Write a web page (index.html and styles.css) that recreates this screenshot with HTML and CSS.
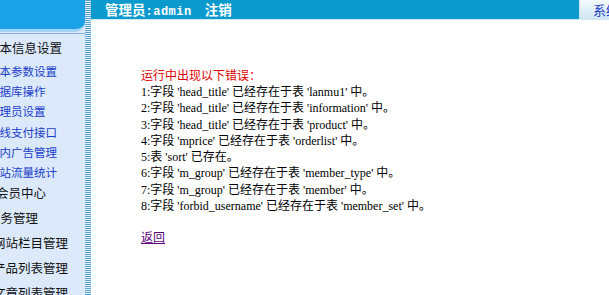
FILE: index.html
```html
<!DOCTYPE html>
<html lang="zh-CN">
<head>
  <meta charset="UTF-8">
  <title>后台管理</title>
  <link rel="stylesheet" href="styles.css">
</head>
<body>
  <!-- left menu frame, scrolled a little to the right -->
  <div class="side">
    <div class="menu">
      <div class="logo"><span>网站后台管理系统</span></div>
      <div class="items">
        <div class="cat first">基本信息设置</div>
        <a class="sub" href="#">基本参数设置</a>
        <a class="sub" href="#">数据库操作</a>
        <a class="sub" href="#">管理员设置</a>
        <a class="sub" href="#">在线支付接口</a>
        <a class="sub" href="#">站内广告管理</a>
        <a class="sub" href="#">网站流量统计</a>
        <div class="cat c1">会员中心</div>
        <div class="cat c2">业务管理</div>
        <div class="cat c3">网站栏目管理</div>
        <div class="cat c3">产品列表管理</div>
        <div class="cat c3">文章列表管理</div>
      </div>
    </div>
    <div class="stripe"></div>
  </div>

  <div class="main">
    <div class="top">
      <div class="user">管理员<span class="name">:admin</span><a class="logout" href="#">注销</a></div>
      <div class="tab">系统首页</div>
    </div>
    <div class="content">
      <p class="err">运行中出现以下错误：</p>
      <div class="list">
        <div>1:字段 'head_title' 已经存在于表 'lanmu1' 中。</div>
        <div>2:字段 'head_title' 已经存在于表 'information' 中。</div>
        <div>3:字段 'head_title' 已经存在于表 'product' 中。</div>
        <div>4:字段 'mprice' 已经存在于表 'orderlist' 中。</div>
        <div>5:表 'sort' 已存在。</div>
        <div>6:字段 'm_group' 已经存在于表 'member_type' 中。</div>
        <div>7:字段 'm_group' 已经存在于表 'member' 中。</div>
        <div>8:字段 'forbid_username' 已经存在于表 'member_set' 中。</div>
      </div>
      <a class="back" href="#">返回</a>
    </div>
  </div>
</body>
</html>
```

FILE: styles.css
```css
body {
  margin: 0;
  display: flex;
  height: 295px;
  overflow: hidden;
  font-family: "Liberation Serif", "Noto Sans CJK SC", serif;
  font-size: 12px;
  background: #fff;
}
.side {
  width: 91px;
  display: flex;
  flex: none;
  background: #dbe9fb;
}
.menu {
  width: 85px;
  overflow: hidden;
  font-family: "Noto Sans CJK SC", sans-serif;
}
.logo {
  height: 29px;
  margin-left: -30px;
  padding-left: 18px;
  background: #1ba1e6;
  border-bottom-right-radius: 10px;
  border-bottom: 3px solid #9fd3f3;
  color: #fff;
  font-weight: bold;
  font-size: 14px;
  white-space: nowrap;
  overflow: hidden;
}
.logo span {
  display: block;
  margin-top: -19px;
  line-height: 18px;
}
.items {
  border-top: 1px solid #7fb2e5;
  margin-top: 1px;
  white-space: nowrap;
}
.cat {
  height: 25px;
  line-height: 25px;
  font-size: 12.5px;
  color: #111;
}
.cat.first {
  height: 27px;
  line-height: 28px;
  margin-left: -13px;
}
.c1 {
  margin-left: -4px;
  margin-top: -2px;
}
.c2 {
  margin-left: -12px;
}
.c3 {
  margin-left: -7px;
}
.sub {
  display: block;
  height: 20.2px;
  line-height: 20px;
  margin-left: -12px;
  font-size: 11.5px;
  color: #1a3ec8;
  text-decoration: none;
}
.stripe {
  width: 6px;
  background: repeating-linear-gradient(to bottom, #5aa3d8 0 1px, #e4f0fb 1px 2px);
}
.main {
  flex: 1;
  min-width: 0;
  overflow: hidden;
}
.top {
  display: flex;
  height: 19px;
  border-bottom: 1px solid #cde9f5;
}
.user {
  flex: 0 0 474px;
  background: #0b9acd;
  color: #fff;
  font-family: "Noto Sans CJK SC", sans-serif;
  font-weight: bold;
  font-size: 13.5px;
  line-height: 19px;
  padding-left: 14px;
  white-space: nowrap;
}
.name {
  font-family: "Liberation Mono", monospace;
  font-size: 12px;
  letter-spacing: 0.5px;
}
.logout {
  color: #fff;
  text-decoration: none;
  margin-left: 13px;
}
.tab {
  flex: 0 0 70px;
  padding-left: 13px;
  border-left: 1px solid #c9e3f2;
  border-top-left-radius: 3px;
  background: linear-gradient(to bottom, #f4fafd, #cfe6f4);
  color: #1a3ec8;
  font-family: "Noto Sans CJK SC", sans-serif;
  font-size: 13px;
  line-height: 19px;
  white-space: nowrap;
}
.content {
  padding: 48px 0 0 50px;
}
.err {
  margin: 0;
  color: #e00000;
  font-size: 12px;
  line-height: 16px;
}
.list {
  line-height: 16.3px;
  color: #000;
}
.back {
  display: inline-block;
  margin-top: 16px;
  color: #60007f;
  line-height: 16px;
}
```
